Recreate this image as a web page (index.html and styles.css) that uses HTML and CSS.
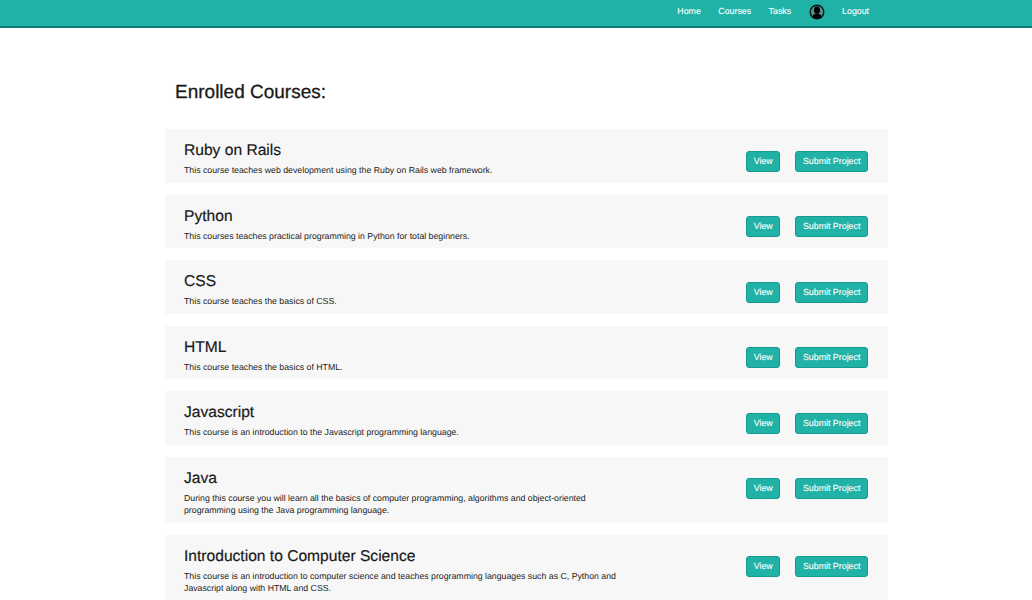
FILE: index.html
```html
<!DOCTYPE html>
<html lang="en">
<head>
<meta charset="utf-8">
<title>Enrolled Courses</title>
<link rel="stylesheet" href="styles.css">
</head>
<body>
<nav class="navbar">
  <a class="nav-link" href="#">Home</a>
  <a class="nav-link" href="#">Courses</a>
  <a class="nav-link" href="#">Tasks</a>
  <a class="nav-avatar" href="#" aria-label="Profile">
    <svg viewBox="0 0 16 16" width="16" height="16">
      <circle cx="8" cy="8" r="7.5" fill="#0b0f10"/>
      <circle cx="8" cy="8" r="6.3" fill="#2c6f68"/>
      <circle cx="8" cy="8" r="5.6" fill="#f1f5f4" opacity="0.25"/>
      <ellipse cx="8" cy="6.2" rx="3" ry="3.6" fill="#000"/>
      <path d="M3.4 13.2c.5-2.6 2.4-3.6 4.6-3.6s4.100 1 4.600 3.600A7 7 0 0 1 8 15a7 7 0 0 1-4.600-1.800z" fill="#000"/>
    </svg>
  </a>
  <a class="nav-link" href="#">Logout</a>
</nav>
<main class="content">
  <h1 class="page-title">Enrolled Courses:</h1>
  <section class="course">
    <div class="course-info">
      <h2 class="course-name">Ruby on Rails</h2>
      <p class="course-desc">This course teaches web development using the Ruby on Rails web framework.</p>
    </div>
    <div class="course-actions"><a class="btn" href="#">View</a><a class="btn" href="#">Submit Project</a></div>
  </section>
  <section class="course">
    <div class="course-info">
      <h2 class="course-name">Python</h2>
      <p class="course-desc">This courses teaches practical programming in Python for total beginners.</p>
    </div>
    <div class="course-actions"><a class="btn" href="#">View</a><a class="btn" href="#">Submit Project</a></div>
  </section>
  <section class="course">
    <div class="course-info">
      <h2 class="course-name">CSS</h2>
      <p class="course-desc">This course teaches the basics of CSS.</p>
    </div>
    <div class="course-actions"><a class="btn" href="#">View</a><a class="btn" href="#">Submit Project</a></div>
  </section>
  <section class="course">
    <div class="course-info">
      <h2 class="course-name">HTML</h2>
      <p class="course-desc">This course teaches the basics of HTML.</p>
    </div>
    <div class="course-actions"><a class="btn" href="#">View</a><a class="btn" href="#">Submit Project</a></div>
  </section>
  <section class="course">
    <div class="course-info">
      <h2 class="course-name">Javascript</h2>
      <p class="course-desc">This course is an introduction to the Javascript programming language.</p>
    </div>
    <div class="course-actions"><a class="btn" href="#">View</a><a class="btn" href="#">Submit Project</a></div>
  </section>
  <section class="course">
    <div class="course-info">
      <h2 class="course-name">Java</h2>
      <p class="course-desc">During this course you will learn all the basics of computer programming, algorithms and object-oriented programming using the Java programming language.</p>
    </div>
    <div class="course-actions"><a class="btn" href="#">View</a><a class="btn" href="#">Submit Project</a></div>
  </section>
  <section class="course">
    <div class="course-info">
      <h2 class="course-name">Introduction to Computer Science</h2>
      <p class="course-desc">This course is an introduction to computer science and teaches programming languages such as C, Python and Javascript along with HTML and CSS.</p>
    </div>
    <div class="course-actions"><a class="btn" href="#">View</a><a class="btn" href="#">Submit Project</a></div>
  </section>
</main>
</body>
</html>
```
FILE: styles.css
```css
* { box-sizing: border-box; }
html, body { margin: 0; padding: 0; }
body {
  background: #fff;
  color: #1a1a1a;
  font-family: "Liberation Sans", Arial, sans-serif;
  text-rendering: geometricPrecision;
  height: 600px;
  overflow: hidden;
}
.navbar {
  height: 28px;
  background: #20b2a6;
  border-bottom: 2px solid #0d7d74;
  display: flex;
  align-items: center;
  justify-content: flex-end;
  gap: 17.500px;
  padding: 0 163px 5px 0;
}
.nav-link {
  color: #fff;
  font-size: 8.800px;
  text-decoration: none;
  -webkit-text-stroke: 0.1px #fff;
}
.nav-avatar { display: flex; width: 16px; height: 16px; margin-top: 3px; }
.content {
  width: 723px;
  margin: 0 0 0 165px;
  padding-top: 53px;
}
.page-title {
  margin: 0 0 24.300px 10px;
  font-size: 19px;
  font-weight: 400;
  line-height: 24px;
  -webkit-text-stroke: 0.3px #1a1a1a;
}
.course {
  display: flex;
  align-items: flex-start;
  justify-content: space-between;
  background: #f7f7f7;
  padding: 13px 20px 6px 19px;
  margin-bottom: 12px;
  min-height: 53.500px;
}
.course-info { width: 440px; }
.course-name {
  margin: 0 0 4px;
  font-size: 15.600px;
  font-weight: 400;
  line-height: 18px;
  -webkit-text-stroke: 0.2px #1a1a1a;
}
.course-desc {
  margin: 0;
  font-size: 8.760px;
  line-height: 12.500px;
  color: #222;
}
.course-actions {
  display: flex;
  gap: 15px;
  align-items: center;
  margin-top: 8.500px;
}
.btn {
  display: block;
  background: #20b2a6;
  border: 1px solid #169a8f;
  border-radius: 3px;
  color: #fff;
  font-size: 8.850px;
  line-height: 19px;
  padding: 0 6.600px;
  text-decoration: none;
  -webkit-text-stroke: 0.1px #fff;
}
```
